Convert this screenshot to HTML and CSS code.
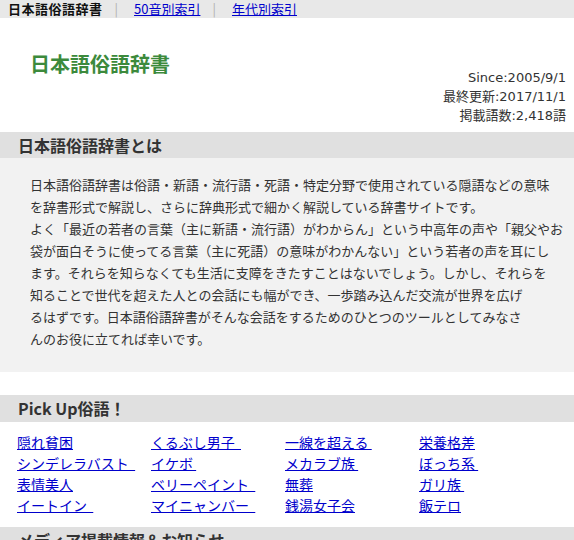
FILE: index.html
```html
<!DOCTYPE html>
<html lang="ja">
<head>
<meta charset="utf-8">
<title>日本語俗語辞書</title>
<link rel="stylesheet" href="styles.css">
</head>
<body>
<div class="topnav">
  <strong class="nav-home">日本語俗語辞書</strong><span class="sep">|</span><a href="#">50音別索引</a><span class="sep">|</span><a href="#">年代別索引</a>
</div>
<header class="masthead">
  <h1 class="site-title">日本語俗語辞書</h1>
  <div class="meta">
    <div>Since:2005/9/1</div>
    <div>最終更新:2017/11/1</div>
    <div>掲載語数:2,418語</div>
  </div>
</header>
<h2 class="sec-head">日本語俗語辞書とは</h2>
<div class="about">
  <p>日本語俗語辞書は俗語・新語・流行語・死語・特定分野で使用されている隠語などの意味<br>を辞書形式で解説し、さらに辞典形式で細かく解説している辞書サイトです。</p>
  <p>よく「最近の若者の言葉（主に新語・流行語）がわからん」という中高年の声や「親父やお<br>袋が面白そうに使ってる言葉（主に死語）の意味がわかんない」という若者の声を耳にし<br>ます。それらを知らなくても生活に支障をきたすことはないでしょう。しかし、それらを<br>知ることで世代を超えた人との会話にも幅ができ、一歩踏み込んだ交流が世界を広げ<br>るはずです。日本語俗語辞書がそんな会話をするためのひとつのツールとしてみなさ<br>んのお役に立てれば幸いです。</p>
</div>
<h2 class="sec-head sec-gap">Pick Up俗語！</h2>
<div class="picks">
  <a href="#">隠れ貧困</a>
  <a href="#">くるぶし男子&nbsp;&nbsp;</a>
  <a href="#">一線を超える&nbsp;</a>
  <a href="#">栄養格差</a>
  <a href="#">シンデレラバスト&nbsp;&nbsp;</a>
  <a href="#">イケボ&nbsp;</a>
  <a href="#">メカラブ族&nbsp;</a>
  <a href="#">ぼっち系&nbsp;</a>
  <a href="#">表情美人</a>
  <a href="#">ベリーペイント&nbsp;&nbsp;</a>
  <a href="#">無葬</a>
  <a href="#">ガリ族&nbsp;</a>
  <a href="#">イートイン&nbsp;&nbsp;</a>
  <a href="#">マイニャンバー&nbsp;&nbsp;</a>
  <a href="#">銭湯女子会</a>
  <a href="#">飯テロ</a>
</div>
<h2 class="sec-head">メディア掲載情報＆お知らせ</h2>
</body>
</html>
```

FILE: styles.css
```css
html, body {
  margin: 0;
  padding: 0;
  background: #ffffff;
  font-family: "Noto Sans CJK JP", "Noto Sans", sans-serif;
  color: #333333;
}

a {
  color: #0000cc;
  text-decoration: underline;
}

.topnav {
  height: 18px;
  line-height: 18px;
  background: #e8e8e8;
  padding-left: 8px;
  font-size: 13px;
  white-space: nowrap;
}

.nav-home {
  color: #111111;
  font-weight: bold;
  letter-spacing: 0.5px;
}

.sep {
  color: #b0b0b0;
  margin: 0 16px 0 12px;
}

.masthead {
  display: flex;
  justify-content: space-between;
  align-items: flex-start;
  height: 114px;
  padding: 0 8px 0 30px;
}

.site-title {
  margin: 33px 0 0;
  font-size: 20px;
  line-height: 26px;
  font-weight: bold;
  color: #3c8a3c;
}

.meta {
  margin-top: 50px;
  text-align: right;
  font-family: "DejaVu Sans", "Noto Sans CJK JP", sans-serif;
  font-size: 13px;
  line-height: 19px;
  color: #333333;
}

.sec-head {
  margin: 0;
  height: 26px;
  line-height: 26px;
  background: #e0e0e0;
  padding-left: 18px;
  font-size: 16px;
  font-weight: bold;
  color: #333333;
}

.sec-gap {
  margin-top: 23px;
  height: 27px;
  line-height: 27px;
}

.about {
  background: #f2f2f2;
  padding: 16px 0 22px 30px;
  font-size: 13px;
  line-height: 22px;
  color: #333333;
  white-space: nowrap;
}

.about p {
  margin: 0;
}

.picks {
  display: grid;
  grid-template-columns: repeat(4, 134px);
  padding: 10px 0 11px 17px;
  font-size: 14px;
  line-height: 21px;
  white-space: nowrap;
}

.picks a {
  justify-self: start;
}
```
